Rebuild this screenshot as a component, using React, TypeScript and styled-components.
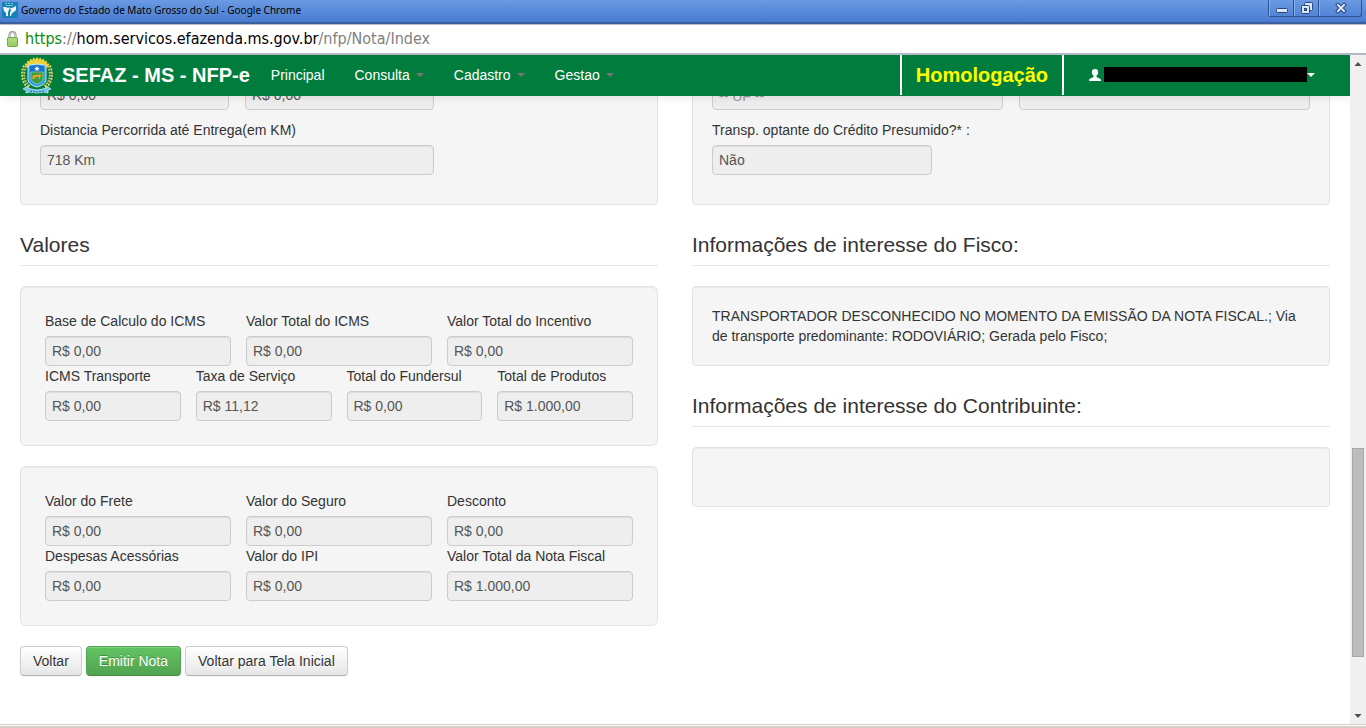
import React, { useId } from "react";
import styled, { createGlobalStyle, css } from "styled-components";

const GlobalStyle = createGlobalStyle`
  * { box-sizing: border-box; }
  body {
    margin: 0;
    background: #fff;
    color: #333;
    font: 14px/20px "Liberation Sans", Arial, sans-serif;
  }
`;

const Window = styled.div`
  display: flex;
  flex-direction: column;
  height: 100vh;
  overflow: hidden;
`;

const TitleBar = styled.header`
  display: flex;
  align-items: flex-start;
  height: 24px;
  flex: none;
  padding: 0 4px 0 2px;
  background: linear-gradient(#6a9ae2, #4a7bd0);
  border-bottom: 2px solid #38609f;
`;

const WindowTitle = styled.h1`
  flex: 1;
  margin: 0 0 0 3px;
  color: #000;
  font: 10px/20px "Noto Sans", Tahoma, sans-serif;
`;

const WindowControls = styled.div`
  display: flex;
  border: 1px solid #2f5290;
  border-top: 0;
  border-radius: 0 0 3px 3px;
`;

const WindowButton = styled.button<{ $wide?: boolean }>`
  display: flex;
  justify-content: center;
  width: ${(p) => (p.$wide ? 42 : 25)}px;
  height: 16px;
  padding: 0;
  border: 0;
  border-left: 1px solid #86adea;
  background: none;
  & + & { box-shadow: -1px 0 #2f5290; }
`;

const AddressBar = styled.div`
  display: flex;
  align-items: center;
  flex: none;
  height: 31px;
  padding: 0 6px;
  gap: 6px;
  background: #fff;
  border-top: 1px solid #b9bdc9;
  border-bottom: 2px solid #b3b8c8;
  box-shadow: inset 0 -1px #fff;
`;

const Address = styled.div`
  color: #808080;
  font: 16px/26px "DejaVu Sans Condensed", Tahoma, sans-serif;
`;
const Scheme = styled.span`color: #0b8a0b;`;
const Host = styled.span`color: #000;`;

const Viewport = styled.div`
  display: flex;
  flex: 1;
  min-height: 0;
  border-bottom: 1px solid #d4d0c8;
`;

const Page = styled.div`
  flex: 1;
  min-width: 0;
  overflow: hidden;
`;

const NavBar = styled.nav`
  position: relative;
  z-index: 1;
  display: flex;
  align-items: center;
  height: 41px;
  padding: 0 35px 2px 20px;
  background: #007d3c;
  color: #fff;
  box-shadow: 0 1px 10px rgba(0, 0, 0, 0.1);
`;

const Brand = styled.a`
  display: flex;
  align-items: center;
  gap: 8px;
  margin-right: 21px;
  color: #fff;
  font-size: 20px;
  font-weight: bold;
  text-decoration: none;
`;

const NavLink = styled.a`
  display: flex;
  align-items: center;
  gap: 6px;
  margin-right: 30px;
  color: #fff;
  text-decoration: none;
`;

const Caret = styled.span<{ $light?: boolean }>`
  border: 4px solid transparent;
  border-top-color: ${(p) => (p.$light ? "#fff" : "#777")};
  border-bottom: 0;
`;

const Environment = styled.strong`
  align-self: flex-start;
  height: 40px;
  margin: 0 25px 0 auto;
  padding: 0 14px;
  border: solid #fff;
  border-width: 0 2px;
  color: #ff0;
  font-size: 20px;
  line-height: 40px;
`;

const UserMenu = styled.a`
  display: flex;
  align-items: center;
`;

const UserName = styled.span`
  width: 203px;
  height: 15px;
  margin-left: 3px;
  background: #000;
`;

const Content = styled.main`
  display: grid;
  grid-template-columns: 1fr 1fr;
  column-gap: 34px;
  margin-top: -36px;
  padding: 0 20px;
`;

const Column = styled.div`min-width: 0;`;

const Section = styled.section``;

const Legend = styled.h2`
  margin: 0 0 20px;
  border-bottom: 1px solid #e5e5e5;
  font-size: 21px;
  font-weight: normal;
  line-height: 40px;
`;

const Well = styled.div<{ $large?: boolean }>`
  min-height: 60px;
  margin-bottom: 20px;
  padding: ${(p) => (p.$large ? 24 : 19)}px;
  border: 1px solid #e3e3e3;
  border-radius: ${(p) => (p.$large ? 6 : 4)}px;
  background: #f5f5f5;
  box-shadow: inset 0 1px 1px rgba(0, 0, 0, 0.05);
`;

const FieldRow = styled.div<{ $columns: number }>`
  display: grid;
  grid-template-columns: repeat(${(p) => p.$columns}, 1fr);
  gap: 15px;
`;

const PairRow = styled.div<{ $width?: string }>`
  display: grid;
  grid-template-columns: 1fr 1fr;
  gap: 16px;
  width: ${(p) => p.$width ?? "100%"};
  margin-bottom: 10px;
`;

const FieldBox = styled.div<{ $width?: string }>`
  width: ${(p) => p.$width ?? "auto"};
`;

const Label = styled.label`
  display: block;
  margin-bottom: 5px;
  white-space: nowrap;
`;

const control = css`
  display: block;
  width: 100%;
  height: 30px;
  padding: 4px 6px;
  border: 1px solid #ccc;
  border-radius: 4px;
  background: #eee;
  color: #555;
  font: inherit;
  box-shadow: inset 0 1px 1px rgba(0, 0, 0, 0.075);
`;
const Input = styled.input`${control}`;
const Select = styled.select`
  ${control}
  padding: 5px 6px 3px;
  appearance: none;
  color: #999;
  opacity: 1;
`;

const LastField = styled.div`margin-bottom: 10px;`;

const Note = styled.p`margin: 0;`;

const Actions = styled.div`
  display: flex;
  gap: 4px;
`;

const Button = styled.button<{ $primary?: boolean }>`
  height: 30px;
  padding: 4px 12px;
  border: 1px solid #ccc;
  border-color: ${(p) => (p.$primary ? "#51a351 #51a351 #468a46" : "#ccc #ccc #b3b3b3")};
  border-radius: 4px;
  background: ${(p) => (p.$primary ? "linear-gradient(#62c462, #51a351)" : "linear-gradient(#fff, #e6e6e6)")};
  color: ${(p) => (p.$primary ? "#fff" : "#333")};
  font: inherit;
  text-shadow: ${(p) => (p.$primary ? "0 -1px 0 rgba(0,0,0,.25)" : "0 1px 1px rgba(255,255,255,.75)")};
  box-shadow: inset 0 1px 0 rgba(255, 255, 255, 0.2), 0 1px 2px rgba(0, 0, 0, 0.05);
`;

const ScrollBar = styled.div`
  display: flex;
  flex-direction: column;
  align-items: center;
  width: 16px;
  padding: 7px 0 6px;
  background: #f0f0f0;
`;

const Track = styled.div`
  display: flex;
  flex-direction: column;
  flex: 1;
  width: 12px;
  margin: 7px 0;
`;
const TrackSpace = styled.div<{ $grow: number }>`flex: ${(p) => p.$grow};`;
const Thumb = styled.div`
  flex: 209;
  border: 1px solid #a8a8a8;
  background: #bcbcbc;
`;

const StatusEdge = styled.div`
  flex: none;
  height: 3px;
  border-top: 1px solid #fff;
  background: #d4d0c8;
`;

function Field({ label, value, width }: { label: string; value: string; width?: string }) {
  const id = useId();
  return (
    <FieldBox $width={width}>
      <Label htmlFor={id}>{label}</Label>
      <Input id={id} value={value} disabled readOnly />
    </FieldBox>
  );
}

function Fields({ items }: { items: [string, string][] }) {
  return (
    <FieldRow $columns={items.length}>
      {items.map(([label, value]) => (
        <Field key={label} label={label} value={value} />
      ))}
    </FieldRow>
  );
}

const FavIconSvg = styled.svg`margin-top: 2px;`;

const FavIcon = () => (
  <FavIconSvg width="16" height="16" viewBox="0 0 16 16" aria-hidden="true">
    <rect width="16" height="16" fill="#1683b4" />
    <path d="M1 5h3l2 1 2-1-1 3-1 2v4l-2 0 0-3-2-2zM8 6l2 0 4-2v4l-2 2-2 1-1 3H8v-3l1-3z" fill="#eaf8fc" />
    <path d="M3 1h2v1H3zM6 1h2v1H6zM9 1h2v1H9zM4 3h7v1H4z" fill="#7cc3de" />
  </FavIconSvg>
);

const Lock = () => (
  <svg width="13" height="16" viewBox="0 0 13 16" aria-hidden="true">
    <path d="M3.500 7V4a3 3 0 0 1 6 0v3" fill="none" stroke="#8d8d8d" strokeWidth="2" />
    <path d="M3.500 7V4a3 3 0 0 1 6 0v3" fill="none" stroke="#d8d8d8" strokeWidth=".8" />
    <rect x="1.500" y="6.500" width="10" height="9" rx="1" fill="#9bd168" stroke="#6fa846" />
    <path d="M2.500 8h8M2.500 10h8" stroke="#b9e48a" />
  </svg>
);

const rays = Array.from({ length: 9 }, (_, i) => -56 + i * 14);

const Crest = () => (
  <svg width="34" height="38" viewBox="0 0 34 38" aria-hidden="true">
    <g fill="#f3d23c">
      {rays.map((a) => (
        <path key={a} d="M15.500 14L15.500 3l1.500-2L18.500 3l0 11z" transform={`rotate(${a} 17 16)`} />
      ))}
    </g>
    <g fill="none" strokeWidth="4" strokeDasharray="2 1">
      <path d="M5 10C2 16 2 26 9 31" stroke="#e6d35b" />
      <path d="M29 10c3 6 3 16-4 21" stroke="#e6d35b" />
    </g>
    <g fill="none" strokeWidth="1.500" strokeDasharray="1 2">
      <path d="M5 11C2 17 3 26 8 30M29 11c3 6 2 15-3 19" stroke="#2c6b8c" />
    </g>
    <path d="M3 33l3-2 5 2q6 2 12 0l5-2 3 2-3 1 0 3-4-1q-7 2-14 0l-4 1 0-3z" fill="#6fc3ec" stroke="#bfe6f8" strokeWidth=".8" />
    <path d="M10 35q7 2 14 0" fill="none" stroke="#1763a8" strokeDasharray="2 1" />
    <path d="M9 9q8-2 16 0l1 2v12c0 5-5 7-9 8-4-1-9-3-9-8V11z" fill="#35a3e4" stroke="#c8e8f6" />
    <path d="M10 10q7-1.500 14 0v6H10z" fill="#1c74c9" />
    <path d="M17 10l.8 1.700 1.900.2-1.400 1.300.4 1.800-1.700-.9-1.700.9.400-1.800-1.400-1.300 1.900-.2z" fill="#fff" />
    <path d="M11 16h12v6c0 3-3 5-6 6-3-1-6-3-6-6z" fill="#3f9d48" stroke="#8ecf78" strokeWidth=".7" />
    <path d="M12.500 23v-3l1.500-1h4l2-1 1.500 1-1.500 2V23h-1v-2h-4v2z" fill="#e3a51e" />
  </svg>
);

const Person = () => (
  <svg width="12" height="12" viewBox="0 0 12 12" aria-hidden="true">
    <path d="M6 0c2 0 3.200 1.200 3.200 3.200C9.200 4.800 8.500 5.800 7.500 6.500v1.200c0 1 4.500 1.300 4.500 3.500v.8H0v-.8c0-2.200 4.500-2.500 4.500-3.500V6.500C3.500 5.800 2.800 4.800 2.800 3.200 2.800 1.200 4 0 6 0z" fill="#fff" />
  </svg>
);

const WindowGlyph = ({ kind }: { kind: "min" | "restore" | "close" }) => (
  <svg width="14" height="14" viewBox="0 0 14 14" aria-hidden="true">
    {kind === "min" && <rect x="1.500" y="8.500" width="11" height="4" rx="1" fill="#dce6f7" stroke="#28467c" />}
    {kind === "restore" && (
      <g fill="#dce6f7" stroke="#28467c">
        <rect x="4.500" y="2.500" width="8" height="8" rx="1" />
        <rect x="1.500" y="5.500" width="8" height="8" rx="1" />
        <rect x="4.500" y="8.500" width="2" height="2" fill="#5c8bd8" />
      </g>
    )}
    {kind === "close" && (
      <g strokeLinecap="square">
        <path d="M4 5l6 6M10 5l-6 6" stroke="#28467c" strokeWidth="4" />
        <path d="M4 5l6 6M10 5l-6 6" stroke="#dce6f7" strokeWidth="2" />
      </g>
    )}
  </svg>
);

const Arrow = ({ down }: { down?: boolean }) => (
  <svg width="16" height="4" viewBox="0 0 16 4" aria-hidden="true">
    <path d={down ? "M4.500 0h7L8 4z" : "M4.500 4h7L8 0z"} fill="#505050" />
  </svg>
);

export default function App() {
  return (
    <Window>
      <GlobalStyle />
      <TitleBar>
        <FavIcon />
        <WindowTitle>Governo do Estado de Mato Grosso do Sul - Google Chrome</WindowTitle>
        <WindowControls>
          <WindowButton aria-label="Minimizar"><WindowGlyph kind="min" /></WindowButton>
          <WindowButton aria-label="Restaurar"><WindowGlyph kind="restore" /></WindowButton>
          <WindowButton aria-label="Fechar" $wide><WindowGlyph kind="close" /></WindowButton>
        </WindowControls>
      </TitleBar>
      <AddressBar>
        <Lock />
        <Address>
          <Scheme>https</Scheme>://<Host>hom.servicos.efazenda.ms.gov.br</Host>/nfp/Nota/Index
        </Address>
      </AddressBar>
      <Viewport>
        <Page>
          <NavBar>
            <Brand href="#"><Crest />SEFAZ - MS - NFP-e</Brand>
            <NavLink href="#">Principal</NavLink>
            <NavLink href="#">Consulta<Caret /></NavLink>
            <NavLink href="#">Cadastro<Caret /></NavLink>
            <NavLink href="#">Gestao<Caret /></NavLink>
            <Environment>Homologação</Environment>
            <UserMenu href="#" aria-label="Usuário"><Person /><UserName /><Caret $light /></UserMenu>
          </NavBar>
          <Content>
            <Column>
              <Well>
                <PairRow $width="394px">
                  <Input aria-label="Valor" value="R$ 0,00" disabled readOnly />
                  <Input aria-label="Valor" value="R$ 0,00" disabled readOnly />
                </PairRow>
                <LastField>
                  <Field label="Distancia Percorrida até Entrega(em KM)" value="718 Km" width="394px" />
                </LastField>
              </Well>
              <Section>
                <Legend>Valores</Legend>
                <Well $large>
                  <Fields items={[["Base de Calculo do ICMS", "R$ 0,00"], ["Valor Total do ICMS", "R$ 0,00"], ["Valor Total do Incentivo", "R$ 0,00"]]} />
                  <Fields items={[["ICMS Transporte", "R$ 0,00"], ["Taxa de Serviço", "R$ 11,12"], ["Total do Fundersul", "R$ 0,00"], ["Total de Produtos", "R$ 1.000,00"]]} />
                </Well>
                <Well $large>
                  <Fields items={[["Valor do Frete", "R$ 0,00"], ["Valor do Seguro", "R$ 0,00"], ["Desconto", "R$ 0,00"]]} />
                  <Fields items={[["Despesas Acessórias", "R$ 0,00"], ["Valor do IPI", "R$ 0,00"], ["Valor Total da Nota Fiscal", "R$ 1.000,00"]]} />
                </Well>
              </Section>
              <Actions>
                <Button>Voltar</Button>
                <Button $primary>Emitir Nota</Button>
                <Button>Voltar para Tela Inicial</Button>
              </Actions>
            </Column>
            <Column>
              <Well>
                <PairRow>
                  <Select aria-label="UF" disabled><option>-- UF --</option></Select>
                  <Input aria-label="Município" disabled />
                </PairRow>
                <LastField>
                  <Field label="Transp. optante do Crédito Presumido?* :" value="Não" width="220px" />
                </LastField>
              </Well>
              <Section>
                <Legend>Informações de interesse do Fisco:</Legend>
                <Well>
                  <Note>
                    TRANSPORTADOR DESCONHECIDO NO MOMENTO DA EMISSÃO DA NOTA FISCAL.; Via de transporte predominante: RODOVIÁRIO; Gerada pelo Fisco;
                  </Note>
                </Well>
              </Section>
              <Section>
                <Legend>Informações de interesse do Contribuinte:</Legend>
                <Well />
              </Section>
            </Column>
          </Content>
        </Page>
        <ScrollBar>
          <Arrow />
          <Track>
            <TrackSpace $grow={379} />
            <Thumb />
            <TrackSpace $grow={50} />
          </Track>
          <Arrow down />
        </ScrollBar>
      </Viewport>
      <StatusEdge />
    </Window>
  );
}
